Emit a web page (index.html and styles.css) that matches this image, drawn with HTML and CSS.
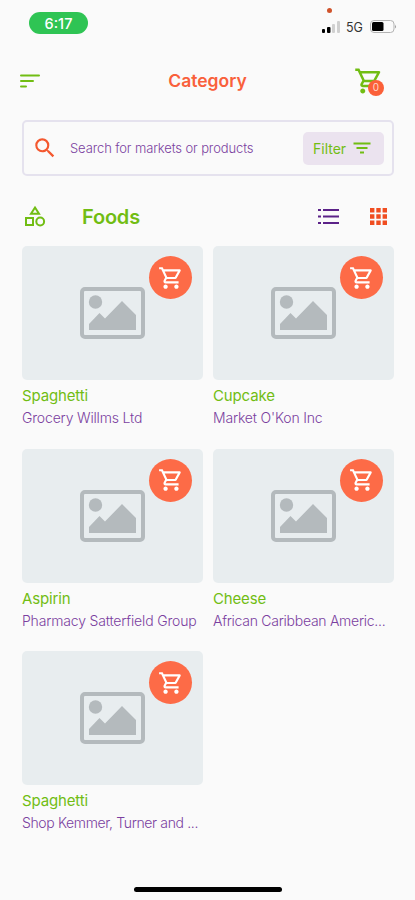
FILE: index.html
```html
<!DOCTYPE html>
<html lang="en">
<head>
  <meta charset="UTF-8">
  <meta name="viewport" content="width=device-width, initial-scale=1.0">
  <title>Category</title>
  <link rel="stylesheet" href="styles.css">
</head>
<body>
  <!-- shared icons -->
  <svg class="symbols" width="0" height="0">
    <symbol id="cart" viewBox="0 0 24 24">
      <path d="M15.55 13c.75 0 1.41-.41 1.75-1.03l3.58-6.49A.996.996 0 0 0 20.01 4H5.21l-.94-2H1v2h2l3.6 7.59-1.35 2.44C4.52 15.37 5.48 17 7 17h12v-2H7l1.1-2h7.45zM6.16 6h12.15l-2.76 5H8.53L6.16 6zM7 18c-1.1 0-1.99.9-1.99 2S5.9 22 7 22s2-.9 2-2-.9-2-2-2zm10 0c-1.1 0-1.99.9-1.99 2s.89 2 1.99 2 2-.9 2-2-.9-2-2-2z"/>
    </symbol>
    <symbol id="photo" viewBox="0 0 65 52">
      <rect x="2" y="2" width="61" height="48" rx="3" fill="none" stroke="#b4babd" stroke-width="4"/>
      <circle cx="15.5" cy="15" r="6.7"/>
      <path d="M9 43v-6l10.5-11L25 31.5 42 14l14 14v15z"/>
    </symbol>
  </svg>

  <div class="status-bar">
    <div class="time">6:17</div>
    <div class="status-icons">
      <span class="mic-dot"></span>
      <svg class="signal" width="18" height="12" viewBox="0 0 18 12">
        <rect x="0" y="8" width="3" height="4" rx="1"/>
        <rect x="5" y="6" width="3.5" height="6" rx="1"/>
        <rect x="10" y="3" width="3" height="9" rx="1" fill="#d0d0d0"/>
        <rect x="15" y="0" width="3" height="12" rx="1" fill="#d0d0d0"/>
      </svg>
      <span class="network">5G</span>
      <svg class="battery" width="27" height="13" viewBox="0 0 27 13">
        <rect x=".5" y=".5" width="23.5" height="12" rx="3.5" fill="none" stroke="#b3b3b3"/>
        <rect x="2" y="2" width="11.5" height="9" rx="1.5"/>
        <path d="M25 4.5q1.8 2 0 4z" fill="#999"/>
      </svg>
    </div>
  </div>

  <header class="header">
    <svg class="menu" width="20" height="14" viewBox="0 0 20 14">
      <path d="M1 1.5h18M1 7h12M1 12.5h5"/>
    </svg>
    <h1>Category</h1>
    <div class="header-cart">
      <svg width="30" height="30"><use href="#cart"/></svg>
      <span class="badge">0</span>
    </div>
  </header>

  <div class="search">
    <svg class="search-icon" width="26" height="26" viewBox="0 0 24 24">
      <path d="M15.5 14h-.79l-.28-.27A6.471 6.471 0 0 0 16 9.5 6.5 6.5 0 1 0 9.5 16c1.61 0 3.09-.59 4.23-1.57l.27.28v.79l5 4.99L20.49 19l-4.99-5zm-6 0C7.01 14 5 11.99 5 9.5S7.01 5 9.5 5 14 7.01 14 9.5 11.99 14 9.5 14z"/>
    </svg>
    <span class="search-text">Search for markets or products</span>
    <div class="filter">
      <span class="filter-text">Filter</span>
      <svg width="18" height="12" viewBox="0 0 18 12">
        <path d="M.5 1.5h17M3.5 6h11M7 10.5h4"/>
      </svg>
    </div>
  </div>

  <div class="section">
    <svg class="shapes" width="22" height="22" viewBox="0 0 22 22">
      <path d="M11 2.5L15 8.8H7z"/>
      <rect x="2" y="13" width="7" height="7"/>
      <circle cx="16.2" cy="16.5" r="3.9"/>
    </svg>
    <h2>Foods</h2>
    <svg class="list" width="21" height="17" viewBox="0 0 21 17">
      <path d="M0 2h3M0 8.5h3M0 15h3M5 2h16M5 8.5h16M5 15h16"/>
    </svg>
    <svg class="grid" width="17" height="17" viewBox="0 0 17 17">
      <path d="M0 0h4.4v4.4H0zM6.3 0h4.4v4.4H6.3zM12.6 0H17v4.4h-4.4zM0 6.3h4.4v4.4H0zM6.3 6.3h4.4v4.4H6.3zM12.6 6.3H17v4.4h-4.4zM0 12.6h4.4V17H0zM6.3 12.6h4.4V17H6.3zM12.6 12.6H17V17h-4.4z"/>
    </svg>
  </div>

  <div class="products">
    <div class="product">
      <div class="thumb">
        <svg class="photo" width="65" height="52"><use href="#photo"/></svg>
        <div class="add"><svg width="26" height="26"><use href="#cart"/></svg></div>
      </div>
      <div class="name">Spaghetti</div>
      <div class="market">Grocery Willms Ltd</div>
    </div>
    <div class="product">
      <div class="thumb">
        <svg class="photo" width="65" height="52"><use href="#photo"/></svg>
        <div class="add"><svg width="26" height="26"><use href="#cart"/></svg></div>
      </div>
      <div class="name">Cupcake</div>
      <div class="market">Market O'Kon Inc</div>
    </div>
    <div class="product">
      <div class="thumb">
        <svg class="photo" width="65" height="52"><use href="#photo"/></svg>
        <div class="add"><svg width="26" height="26"><use href="#cart"/></svg></div>
      </div>
      <div class="name">Aspirin</div>
      <div class="market">Pharmacy Satterfield Group</div>
    </div>
    <div class="product">
      <div class="thumb">
        <svg class="photo" width="65" height="52"><use href="#photo"/></svg>
        <div class="add"><svg width="26" height="26"><use href="#cart"/></svg></div>
      </div>
      <div class="name">Cheese</div>
      <div class="market tight">African Caribbean Americ...</div>
    </div>
    <div class="product">
      <div class="thumb">
        <svg class="photo" width="65" height="52"><use href="#photo"/></svg>
        <div class="add"><svg width="26" height="26"><use href="#cart"/></svg></div>
      </div>
      <div class="name">Spaghetti</div>
      <div class="market tighter">Shop Kemmer, Turner and ...</div>
    </div>
  </div>

  <div class="home-bar"></div>
</body>
</html>
```
FILE: styles.css
```css
* {
  box-sizing: border-box;
}
body {
  margin: 0;
  height: 900px;
  padding: 0 21px 8px 22px;
  display: flex;
  flex-direction: column;
  background-color: #fafafa;
  font-family: Inter, "Open Sans", sans-serif;
  overflow: hidden;
}
svg {
  display: block;
  flex-shrink: 0;
}
.symbols {
  position: absolute;
}

/* status bar */
.status-bar {
  height: 54px;
  padding: 12px 0 0 7px;
  display: flex;
  justify-content: space-between;
  align-items: flex-start;
}
.time {
  width: 59px;
  height: 22px;
  border-radius: 11px;
  background-color: #2fc454;
  color: white;
  font-size: 14.5px;
  font-weight: 500;
  line-height: 23px;
  text-align: center;
}
.status-icons {
  position: relative;
  display: flex;
  align-items: center;
  height: 13px;
  margin: 8px -3px 0 0;
}
.mic-dot {
  position: absolute;
  left: 5px;
  top: -12px;
  width: 5px;
  height: 5px;
  border-radius: 50%;
  background-color: #d0532b;
}
.network {
  width: 17px;
  margin: 1px 7px 0 6px;
  font-size: 12.5px;
  color: #333;
}

/* header */
.header {
  height: 54px;
  display: flex;
  justify-content: space-between;
  align-items: center;
}
.menu {
  margin: -1px 0 0 -2px;
  stroke: #71bd13;
  stroke-width: 2;
  stroke-linecap: round;
}
h1 {
  margin: -2px 0 0 21px;
  font-size: 17.5px;
  font-weight: 600;
  color: #f9603b;
}
.header-cart {
  position: relative;
  margin: -1px 10px 0 0;
  fill: #71bd13;
}
.badge {
  position: absolute;
  left: 14px;
  top: 14px;
  width: 16px;
  height: 16px;
  border-radius: 50%;
  background-color: #fb6039;
  color: #ffd9cc;
  font-size: 10px;
  line-height: 15px;
  text-align: center;
}

/* search */
.search {
  height: 56px;
  margin-top: 12px;
  padding: 0 8px 0 8px;
  display: flex;
  align-items: center;
  border: 2px solid #e5e2ee;
  border-radius: 5px;
}
.search-icon {
  fill: #f4582f;
}
.search-text {
  flex: 1;
  margin-left: 12px;
  font-size: 13px;
  font-weight: 300;
  letter-spacing: -0.12px;
  color: #7b3fa0;
  white-space: nowrap;
}
.filter {
  width: 81px;
  height: 33px;
  padding: 0 13px 0 10px;
  display: flex;
  align-items: center;
  justify-content: space-between;
  border-radius: 5px;
  background-color: #ebe3ef;
  color: #71bd13;
  font-size: 14px;
}
.filter svg {
  stroke: #71bd13;
  stroke-width: 2;
}

/* section title */
.section {
  height: 70px;
  padding: 11px 7px 0 2px;
  display: flex;
  align-items: center;
}
.shapes {
  margin-top: -2px;
  fill: none;
  stroke: #71bd13;
  stroke-width: 2;
}
h2 {
  flex: 1;
  margin: 1px 0 0 36px;
  font-size: 20px;
  font-weight: 600;
  letter-spacing: -0.2px;
  color: #71bd13;
}
.list {
  margin-top: -1px;
  stroke: #5b2288;
  stroke-width: 2.2;
}
.grid {
  margin: -1px 0 0 31px;
  fill: #f04d20;
}

/* products */
.products {
  display: grid;
  grid-template-columns: 181px 181px;
  grid-auto-rows: 202.5px;
  column-gap: 10px;
}
.thumb {
  position: relative;
  height: 134px;
  display: flex;
  align-items: center;
  justify-content: center;
  border-radius: 5px;
  background-color: #e8edef;
}
.photo {
  fill: #b4babd;
}
.add {
  position: absolute;
  top: 10px;
  right: 11px;
  width: 43px;
  height: 43px;
  display: flex;
  align-items: center;
  justify-content: center;
  border-radius: 50%;
  background-color: #fd6b47;
  fill: white;
}
.name {
  margin-top: 5px;
  font-size: 15px;
  line-height: 22px;
  letter-spacing: -0.15px;
  color: #71bd13;
}
.market {
  font-size: 14px;
  font-weight: 300;
  line-height: 22px;
  letter-spacing: -0.17px;
  color: #7b3fa0;
  white-space: nowrap;
}
.tight {
  letter-spacing: -0.27px;
}
.tighter {
  letter-spacing: -0.36px;
}

.home-bar {
  width: 148px;
  height: 5px;
  margin: auto auto 0 112px;
  border-radius: 3px;
  background-color: black;
}
```
